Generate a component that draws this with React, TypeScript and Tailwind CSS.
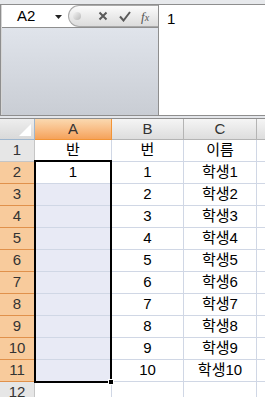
import React from "react";

const rows: { a: string; b: string; c: string }[] = [
  { a: "반", b: "번", c: "이름" },
  { a: "1", b: "1", c: "학생1" },
  { a: "", b: "2", c: "학생2" },
  { a: "", b: "3", c: "학생3" },
  { a: "", b: "4", c: "학생4" },
  { a: "", b: "5", c: "학생5" },
  { a: "", b: "6", c: "학생6" },
  { a: "", b: "7", c: "학생7" },
  { a: "", b: "8", c: "학생8" },
  { a: "", b: "9", c: "학생9" },
  { a: "", b: "10", c: "학생10" },
  { a: "", b: "", c: "" },
];

function FormulaBar() {
  return (
    <div className="flex h-[112px] border-y border-l border-[#8e8e8e] bg-white">
      <div className="flex w-[157px] flex-col border-l border-[#d6d6d6]">
        <div className="flex h-[23px] items-center border-b border-[#8e8e8e] bg-white">
          <span className="ml-[15px] w-[38px] text-[15px] text-black">A2</span>
          <svg width="7" height="4" viewBox="0 0 7 4" className="mt-[1px]">
            <path d="M0 0h7L3.5 4z" fill="#222" />
          </svg>
          <div className="ml-[6px] flex h-[22px] flex-1 items-center rounded-l-full border-y border-l border-[#a9a9a9] bg-gradient-to-b from-[#fbfbfb] to-[#dcdcdc]">
            <div className="ml-[4px] h-[8px] w-[8px] rounded-full bg-gradient-to-br from-[#f4f4f4] to-[#b9b9b9]" />
            <svg width="10" height="10" viewBox="0 0 10 10" className="ml-[17px]">
              <path d="M1.5 1.5l7 7M8.5 1.5l-7 7" stroke="#5a5a5a" strokeWidth="2" />
            </svg>
            <svg width="12" height="11" viewBox="0 0 12 11" className="ml-[11px]">
              <path d="M1 5.5l3.5 4L11 1" stroke="#5a5a5a" strokeWidth="2" fill="none" />
            </svg>
            <span className="ml-[10px] text-[13px] italic leading-none text-[#555]" style={{ fontFamily: '"Liberation Serif", serif' }}>
              f<span className="text-[10px]">x</span>
            </span>
          </div>
        </div>
        <div className="flex-1 bg-gradient-to-b from-[#e0e4eb] to-[#c9cdd4]" />
      </div>
      <div className="flex-1 border-l border-[#8e8e8e] bg-white pl-[8px] pt-[3px] text-[15px] text-black">1</div>
    </div>
  );
}

export default function App() {
  return (
    <div
      className="h-[397px] w-[265px] overflow-hidden bg-[#e3e6ea]"
      style={{ fontFamily: '"Liberation Sans", "Noto Sans CJK KR", sans-serif' }}
    >
      <div className="h-[4px] bg-[#e7e9ec]" />
      <FormulaBar />
      <div className="h-[3px] border-b border-[#8e8e8e] bg-[#e4e6ea]" />

      <div className="relative bg-white">
        {/* column headers */}
        <div className="flex h-[21px] text-[15px] text-[#333]">
          <div className="relative w-[35px] border-r border-b border-[#9eb6ce] bg-gradient-to-b from-[#eeeeee] to-[#d9d9d9]">
            <svg width="12" height="12" viewBox="0 0 12 12" className="absolute bottom-[3px] right-[3px]">
              <path d="M12 0v12H0z" fill="#ffffff" />
            </svg>
          </div>
          <div className="flex w-[77px] items-center justify-center border-r border-b border-[#f29436] bg-gradient-to-b from-[#fad9b0] to-[#f5a25a]">A</div>
          <div className="flex w-[72px] items-center justify-center border-r border-b border-[#b4b4b4] bg-gradient-to-b from-[#f5f5f5] to-[#dddddd]">B</div>
          <div className="flex w-[73px] items-center justify-center border-r border-b border-[#b4b4b4] bg-gradient-to-b from-[#f5f5f5] to-[#dddddd]">C</div>
          <div className="flex-1 border-b border-[#b4b4b4] bg-gradient-to-b from-[#f5f5f5] to-[#dddddd]" />
        </div>

        {rows.map((r, i) => {
          const n = i + 1;
          const sel = n >= 2 && n <= 11;
          return (
            <div key={n} className="flex h-[22px] text-[15px] text-black">
              <div
                className={
                  sel
                    ? "flex w-[35px] items-center justify-center border-r border-b border-[#e0914b] bg-[#f8cb9c] text-[#333]"
                    : "flex w-[35px] items-center justify-center border-r border-b border-[#c5c5c5] bg-[#e6e6e6] text-[#333]"
                }
              >
                {n}
              </div>
              <div
                className={
                  sel && n > 2
                    ? "flex w-[77px] items-center justify-center border-r border-b border-[#d0d7e5] bg-[#e8eaf5]"
                    : "flex w-[77px] items-center justify-center border-r border-b border-[#d0d7e5]"
                }
              >
                {r.a}
              </div>
              <div className="flex w-[72px] items-center justify-center border-r border-b border-[#d0d7e5]">{r.b}</div>
              <div className="flex w-[73px] items-center justify-center border-r border-b border-[#d0d7e5]">{r.c}</div>
              <div className="flex-1 border-b border-[#d0d7e5]" />
            </div>
          );
        })}

        {/* selection border A2:A11 */}
        <div className="pointer-events-none absolute left-[34px] top-[41px] h-[223px] w-[78px] border-2 border-black" />
        <div className="absolute left-[108px] top-[260px] h-[6px] w-[6px] border border-white bg-black" />
      </div>
    </div>
  );
}
